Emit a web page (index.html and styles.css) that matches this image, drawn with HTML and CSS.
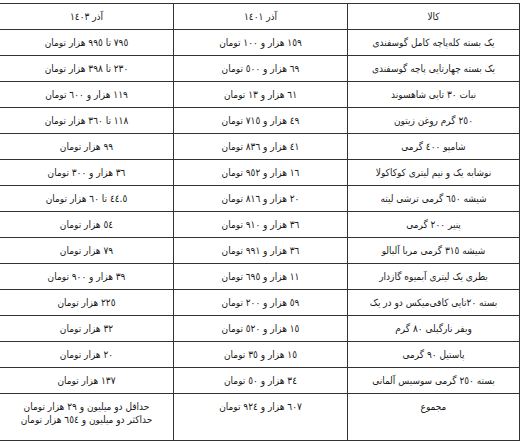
FILE: index.html
```html
<!DOCTYPE html>
<html lang="fa" dir="rtl">
<head>
<meta charset="utf-8">
<title>مقایسه قیمت</title>
<link rel="stylesheet" href="styles.css">
</head>
<body>
<table class="prices">
  <thead>
    <tr><th class="c-item">کالا</th><th class="c-old">آذر ١٤٠١</th><th class="c-new">آذر ١٤٠٣</th></tr>
  </thead>
  <tbody>
    <tr><td>یک بسته کله‌پاچه کامل گوسفندی</td><td>١٥٩ هزار و ١٠٠ تومان</td><td>٧٩٥ تا ٩٩٥ هزار تومان</td></tr>
    <tr><td>یک بسته چهارتایی پاچه گوسفندی</td><td>٦٩ هزار و ٥٠٠ تومان</td><td>٢٣٠ تا ٣٩٨ هزار تومان</td></tr>
    <tr><td>نبات ٣٠ تایی شاهسوند</td><td>٦١ هزار و ١٣ تومان</td><td>١١٩ هزار و ٦٠٠ تومان</td></tr>
    <tr><td>٢٥٠ گرم روغن زیتون</td><td>٤٩ هزار و ٧١٥ تومان</td><td>١١٨ تا ٣٦٠ هزار تومان</td></tr>
    <tr><td>شامپو ٤٠٠ گرمی</td><td>٤١ هزار و ٨٣٦ تومان</td><td>٩٩ هزار تومان</td></tr>
    <tr><td>نوشابه یک و نیم لیتری کوکاکولا</td><td>١٦ هزار و ٩٥٢ تومان</td><td>٣٦ هزار و ٣٠٠ تومان</td></tr>
    <tr><td>شیشه ٦٥٠ گرمی ترشی لیته</td><td>٢٠ هزار و ٨١٦ تومان</td><td>٤٤.٥ تا ٦٠ هزار تومان</td></tr>
    <tr><td>پنیر ٢٠٠ گرمی</td><td>٣٦ هزار و ٩١٠ تومان</td><td>٥٤ هزار تومان</td></tr>
    <tr><td>شیشه ٣١٥ گرمی مربا آلبالو</td><td>٣٦ هزار و ٩٩١ تومان</td><td>٧٩ هزار تومان</td></tr>
    <tr><td>بطری یک لیتری آبمیوه گازدار</td><td>١١ هزار و ٦٩٥ تومان</td><td>٣٩ هزار و ٩٠٠ تومان</td></tr>
    <tr><td>بسته ٢٠تایی کافی‌میکس دو در یک</td><td>٥٩ هزار و ٢٠٠ تومان</td><td>٢٢٥ هزار تومان</td></tr>
    <tr><td>ویفر نارگیلی ٨٠ گرم</td><td>١٥ هزار و ٥٢٠ تومان</td><td>٣٢ هزار تومان</td></tr>
    <tr><td>پاستیل ٩٠ گرمی</td><td>١٥ هزار و ٣٥ تومان</td><td>٢٠ هزار تومان</td></tr>
    <tr><td>بسته ٢٥٠ گرمی سوسیس آلمانی</td><td>٣٤ هزار و ٥٠ تومان</td><td>١٣٧ هزار تومان</td></tr>
    <tr class="total"><td>مجموع</td><td>٦٠٧ هزار و ٩٢٤ تومان</td><td>حداقل دو میلیون و ٢٩ هزار تومان<br>حداکثر دو میلیون و ٦٥٤ هزار تومان</td></tr>
  </tbody>
</table>
</body>
</html>
```

FILE: styles.css
```css
html, body {
  margin: 0;
  padding: 0;
  background: #ffffff;
}

body {
  padding: 3px 4px 0 3px;
  font-family: "DejaVu Sans", sans-serif;
  font-stretch: condensed;
  font-size: 10px;
  color: #1a1a1a;
}

.prices {
  direction: rtl;
  border-collapse: collapse;
  width: 517px;
  table-layout: fixed;
}

.prices th,
.prices td {
  border: 1px solid #333333;
  text-align: center;
  vertical-align: top;
  font-weight: normal;
  padding: 6px 2px 0;
  height: 19px;
  line-height: 13px;
  white-space: nowrap;
}

.prices .c-item { width: 167px; }
.prices .c-old { width: 169px; }
.prices .c-new { width: 169px; }

.prices .total td {
  height: 40px;
}
```
